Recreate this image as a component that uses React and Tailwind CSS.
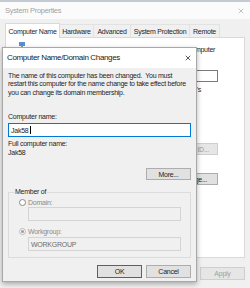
import React from "react";

function XIcon({ className, stroke = "#333", w = 1 }) {
  return (
    <svg viewBox="0 0 8 8" className={className} fill="none">
      <path d="M1 1 L7 7 M7 1 L1 7" stroke={stroke} strokeWidth={w} />
    </svg>
  );
}

function Tab({ label, width, selected }) {
  return (
    <div
      className={
        selected
          ? "h-[15px] bg-white border border-b-0 border-[#d9d9d9] flex items-center justify-center relative top-[1px] z-10"
          : "h-[13px] border border-b-0 border-l-0 border-[#e2e2e2] flex items-center justify-center"
      }
      style={{ width }}
    >
      <span className="whitespace-nowrap leading-none">{label}</span>
    </div>
  );
}

export default function App() {
  return (
    <div className="relative w-[250px] h-[288px] overflow-hidden bg-[#f0f0f0] font-['Liberation_Sans',Arial,sans-serif] text-[7px] tracking-[-0.25px] text-[#1e1e1e]">
      {/* Background window: System Properties */}
      <div className="h-[2px] bg-[#c4cad2]" />
      <div className="h-[17px] bg-[#fbfbfb] flex items-center justify-between pl-[5px] pr-[6px]">
        <span className="text-[7.5px] tracking-[-0.3px] text-[#a3a3a3] leading-none">System Properties</span>
        <XIcon className="w-[6px] h-[6px]" stroke="#b0b0b0" />
      </div>
      <div className="flex flex-col px-[5px]">
        <div className="flex items-end mt-[3px] h-[15px]">
          <Tab label="Computer Name" width={55} selected />
          <Tab label="Hardware" width={34} />
          <Tab label="Advanced" width={37} />
          <Tab label="System Protection" width={59} />
          <Tab label="Remote" width={30} />
        </div>
        <div className="h-[221px] bg-white border border-[#d9d9d9] flex">
          <div className="ml-[12px] mt-[3px] w-[8px] h-[8px]">
            <svg viewBox="0 0 8 8" className="w-[8px] h-[8px]">
              <rect x="1" y="1" width="6" height="4" fill="#5b8fc9" />
              <rect x="3" y="5" width="2" height="2" fill="#7a9cc4" />
            </svg>
          </div>
          <div className="ml-auto w-[94px] mr-[13px] flex flex-col">
            <span className="ml-[51px] mt-[8px] leading-[8px] whitespace-nowrap">computer</span>
            <div className="mt-[16px] h-[12px] w-[81px] border border-[#7a7a7a] bg-white" />
            <span className="ml-[45px] mt-[4px] leading-[8px] whitespace-nowrap">Mary&apos;s</span>
            <div className="mt-[49px] ml-[20px] h-[12px] w-[61px] bg-[#e6e6e6] border border-[#cfcfcf] flex items-center justify-end pr-[8px] text-[#9a9a9a] leading-none whitespace-nowrap">
              Network ID...
            </div>
            <div className="mt-[18px] ml-[29px] h-[12px] w-[52px] bg-[#e1e1e1] border border-[#adadad] flex items-center justify-end pr-[10px] leading-none whitespace-nowrap">
              Change...
            </div>
          </div>
        </div>
        <div className="self-end mt-[9px] h-[13px] w-[45px] bg-[#e6e6e6] border border-[#cfcfcf] flex items-center justify-center text-[#a0a0a0] leading-none">
          Apply
        </div>
      </div>

      {/* Overlay dialog: Computer Name/Domain Changes */}
      <div className="absolute left-[2px] top-[47px] w-[195px] h-[235px] bg-[#f0f0f0] border border-[#a8a8a8] shadow-[0_2px_5px_rgba(0,0,0,0.3)] flex flex-col">
        <div className="h-[20px] bg-white flex items-center justify-between pl-[4px] pr-[5px]">
          <span className="text-[8px] tracking-[-0.35px] leading-none text-[#1a1a1a] whitespace-nowrap">
            Computer Name/Domain Changes
          </span>
          <XIcon className="w-[6px] h-[6px]" stroke="#222" />
        </div>
        <div className="flex flex-col px-[5px] pt-[4px]">
          <p className="leading-[8.4px] whitespace-nowrap">
            The name of this computer has been changed.&nbsp; You must
            <br />
            restart this computer for the name change to take effect before
            <br />
            you can change its domain membership.
          </p>
          <span className="mt-[16px] leading-[8px]">Computer name:</span>
          <div className="mt-[2px] h-[14px] border border-[#0078d7] bg-white flex items-center pl-[2px]">
            <span className="leading-none">Jak58</span>
            <span className="ml-[2px] w-[1px] h-[8px] bg-black" />
          </div>
          <span className="mt-[3px] leading-[8px]">Full computer name:</span>
          <span className="mt-[1px] leading-[8px]">Jak58</span>
          <div className="self-end mt-[11px] h-[12px] w-[45px] bg-[#e1e1e1] border border-[#adadad] flex items-center justify-center leading-none">
            More...
          </div>
          <div className="relative mt-[12px] h-[66px] border border-[#dcdcdc] flex flex-col pl-[10px] pr-[9px]">
            <span className="absolute left-[5px] -top-[5px] bg-[#f0f0f0] px-[1px] leading-[8px]">Member of</span>
            <div className="mt-[5px] flex items-center h-[8px]">
              <span className="w-[7px] h-[7px] rounded-full border border-[#8a8a8a] bg-white" />
              <span className="ml-[2px] leading-none text-[#8c8c8c]">Domain:</span>
            </div>
            <div className="mt-[1px] ml-[9px] h-[14px] border border-[#d4d4d4] bg-[#f0f0f0]" />
            <div className="mt-[6px] flex items-center h-[8px]">
              <span className="w-[7px] h-[7px] rounded-full border border-[#bcbcbc] bg-[#f5f5f5] flex items-center justify-center">
                <span className="w-[3px] h-[3px] rounded-full bg-[#9c9c9c]" />
              </span>
              <span className="ml-[2px] leading-none text-[#8c8c8c]">Workgroup:</span>
            </div>
            <div className="mt-[2px] ml-[9px] h-[14px] border border-[#d4d4d4] bg-[#f0f0f0] flex items-center pl-[2px] text-[#6e6e6e] leading-none">
              WORKGROUP
            </div>
          </div>
          <div className="mt-[7px] flex justify-end gap-[4px]">
            <div className="h-[13px] w-[45px] bg-[#e1e1e1] border border-[#0078d7] flex items-center justify-center leading-none">
              OK
            </div>
            <div className="h-[13px] w-[45px] bg-[#e1e1e1] border border-[#adadad] flex items-center justify-center leading-none">
              Cancel
            </div>
          </div>
        </div>
      </div>
    </div>
  );
}
